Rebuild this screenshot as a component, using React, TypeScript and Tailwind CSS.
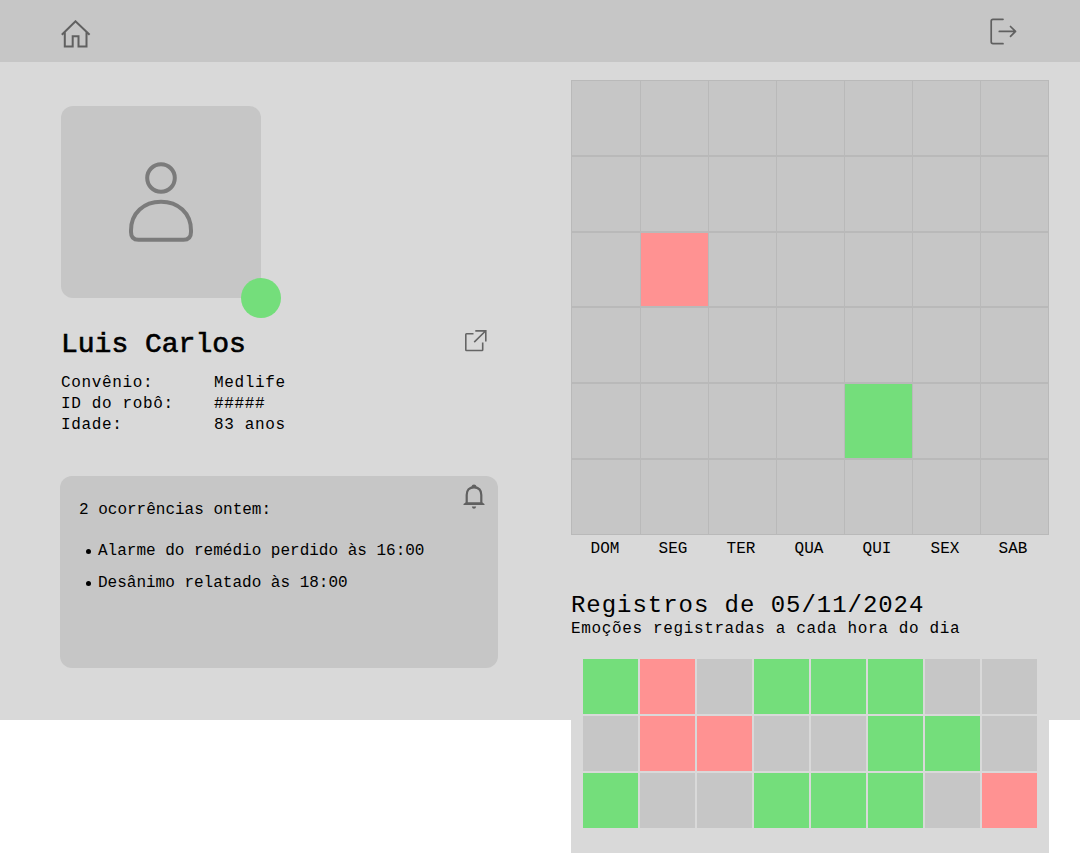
const days = ['DOM', 'SEG', 'TER', 'QUA', 'QUI', 'SEX', 'SAB'];
const hours = 'gr.ggg...rr..gg.g..ggg.r'.split('');

const tone: Record<string, string> = {
  g: 'bg-[#74de7b]',
  r: 'bg-[#ff9292]',
  '.': 'bg-[#c6c6c6]',
};

function HomeIcon() {
  return (
    <svg className="mt-5 h-7 w-[30px]" viewBox="0 0 30 28" fill="none" stroke="#606060" strokeWidth="2">
      <path d="M.8 14.8 14.5 1.3 28.6 14.8M3.8 12V26.5H11.7V16.3H17.5V26.5H25.5V12" />
    </svg>
  );
}

function LogoutIcon() {
  return (
    <svg className="mt-[18px] h-[27px] w-[27px]" viewBox="0 0 27 27" fill="none" stroke="#606060" strokeWidth="1.7" strokeLinecap="round" strokeLinejoin="round">
      <path d="M13 1.3H3Q1.2 1.3 1.2 3V23.8Q1.2 25.7 3 25.7H13M9.3 13.4H25.5M20.5 8.5 25.5 13.4 20.5 18.3" />
    </svg>
  );
}

function PersonIcon() {
  return (
    <svg className="h-20 w-16" viewBox="0 0 64 80" fill="none" stroke="#7b7b7b" strokeWidth="4">
      <circle cx="32" cy="16" r="13.8" />
      <path d="M2 68.5C2 51 15 39.8 32 39.8S62 51 62 68.5V70Q62 77.8 54.5 77.8H9.5Q2 77.8 2 70Z" />
    </svg>
  );
}

function OpenIcon() {
  return (
    <svg className="mb-0.5 mr-[11px] h-[22px] w-[22px]" viewBox="0 0 22 22" fill="none" stroke="#656565" strokeWidth="1.6">
      <path d="M8.5 3.8H1.5Q.8 3.8 .8 4.5V19.8Q.8 20.5 1.5 20.5H17Q17.7 20.5 17.7 19.8V12.5M9.2 12.1 20.5 1M10.3.9H20.8V11.5" />
    </svg>
  );
}

function BellIcon() {
  return (
    <svg className="absolute left-[403px] top-2 h-[25px] w-[22px]" viewBox="0 0 22 25" fill="none">
      <path d="M3.7 19V11C3.7 6 6.3 3.3 11 3.3S18.3 6 18.3 11V19" stroke="#606060" strokeWidth="2.2" />
      <path d="M.5 21V20L3 18.2H19L21.5 20V21ZM8.8 22.5H13.2Q12.8 24.8 11 24.8T8.8 22.5ZM8.3 3.7V2.7Q9 .5 11 .5T13.7 2.7V3.7Z" fill="#606060" />
    </svg>
  );
}

export default function App() {
  return (
    <div className="h-[853px] w-[1080px] overflow-hidden bg-white font-['Liberation_Mono',monospace] text-base text-black">
      <header className="flex h-[62px] items-start justify-between bg-[#c6c6c6] pl-[61px] pr-[63px]">
        <HomeIcon />
        <LogoutIcon />
      </header>
      <main className="flex h-[658px] items-start bg-[#d9d9d9]">
        <section className="ml-[60px] w-[438px] pt-11">
          <div className="relative ml-px flex h-48 w-[200px] items-center justify-center rounded-xl bg-[#c6c6c6]">
            <PersonIcon />
            <span className="absolute -bottom-5 -right-5 size-10 rounded-full bg-[#74de7b]" />
          </div>
          <div className="mt-[25px] flex h-[38px] items-center justify-between pl-px">
            <h1 className="pt-1.5 text-[28px] font-normal leading-[38px] [-webkit-text-stroke:0.65px_black]">Luis Carlos</h1>
            <OpenIcon />
          </div>
          <dl className="mt-3 grid grid-cols-[153px_auto] pl-px leading-[21px] tracking-[0.04em]">
            <dt>Convênio:</dt><dd>Medlife</dd>
            <dt>ID do robô:</dt><dd>#####</dd>
            <dt>Idade:</dt><dd>83 anos</dd>
          </dl>
          <div className="relative mt-10 h-48 rounded-xl bg-[#c6c6c6] pl-[19px] pt-6">
            <BellIcon />
            <p className="leading-[21px]">2 ocorrências ontem:</p>
            <ul className="mt-3.5 pl-[7px] leading-8">
              <li className="flex items-center gap-[7px]"><span className="size-[5px] rounded-full bg-black" />Alarme do remédio perdido às 16:00</li>
              <li className="flex items-center gap-[7px]"><span className="size-[5px] rounded-full bg-black" />Desânimo relatado às 18:00</li>
            </ul>
          </div>
        </section>
        <section className="ml-[73px] h-[791px] w-[478px] bg-[#d9d9d9] pt-[18px]">
          <div className="grid h-[455px] w-[478px] grid-cols-[69px_68px_68px_68px_68px_68px_68px] grid-rows-[76px_76px_75px_76px_76px_75px] border-l border-t border-[#b9b9b9]">
            {Array.from({ length: 42 }, (_, i) => (
              <div key={i} className={`border-r border-[#b9b9b9] ${i < 35 ? 'border-b-2' : 'border-b'} ${i === 15 ? tone.r : i === 32 ? tone.g : tone['.']}`} />
            ))}
          </div>
          <div className="grid w-[476px] grid-cols-7 text-center leading-7">
            {days.map((day) => <span key={day}>{day}</span>)}
          </div>
          <h2 className="mt-[27px] text-2xl font-normal leading-8 tracking-[0.04em]">Registros de 05/11/2024</h2>
          <p className="-mt-px leading-4 tracking-[0.04em]">Emoções registradas a cada hora do dia</p>
          <div className="ml-3 mt-[22px] grid w-[454px] grid-cols-8 gap-0.5">
            {hours.map((value, i) => <div key={i} className={`h-[55px] ${tone[value]}`} />)}
          </div>
        </section>
      </main>
    </div>
  );
}
